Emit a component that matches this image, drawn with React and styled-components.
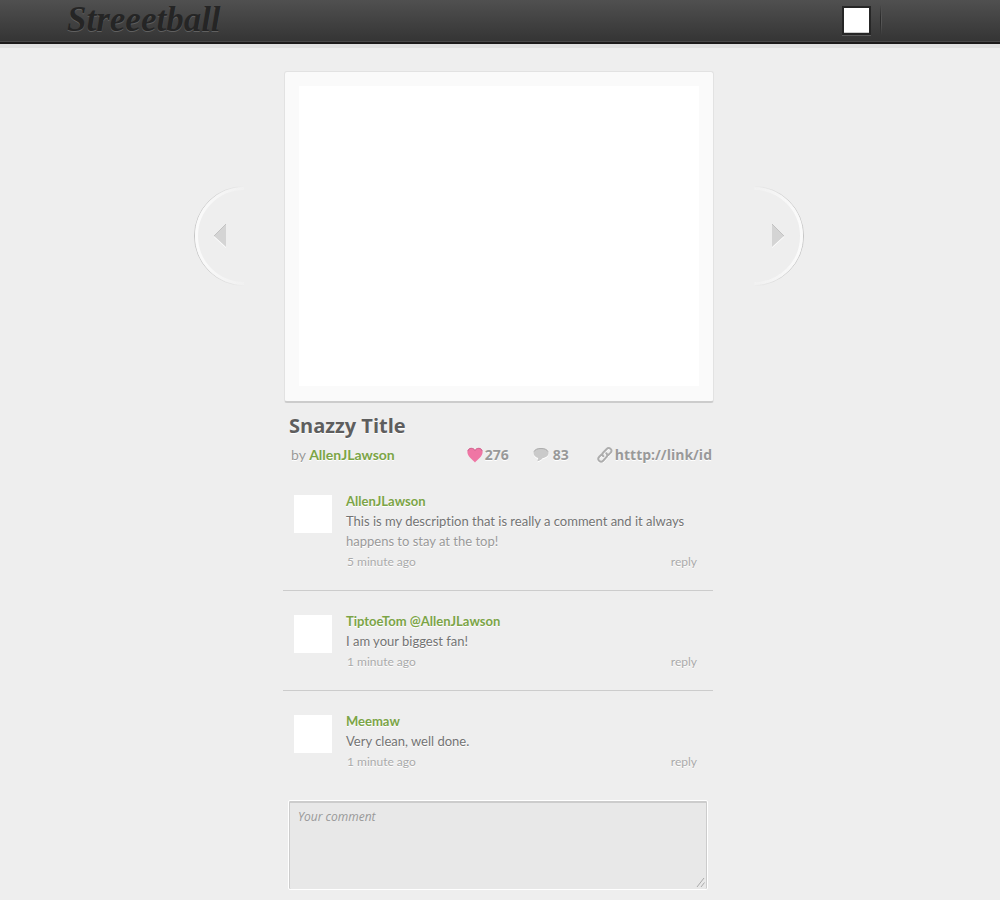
import React from "react";
import styled, { createGlobalStyle } from "styled-components";

const sans = '"Open Sans", "Noto Sans", sans-serif';
const humanist = 'Lato, "Open Sans", sans-serif';

const GlobalStyle = createGlobalStyle`
  *, *::before, *::after { box-sizing: border-box; }
  body {
    margin: 0;
    color: #777;
    background: #eee;
    font: 13px/20px ${humanist};
    font-variant-ligatures: none;
    text-shadow: 0 1px 0 #fff;
  }
  a { color: inherit; text-decoration: none; }
  button { padding: 0; border: 0; background: none; font: inherit; color: inherit; text-shadow: inherit; cursor: pointer; }
  h1, p { margin: 0; }
`;

const Header = styled.header`
  display: flex;
  align-items: center;
  justify-content: space-between;
  height: 44px;
  padding: 0 118px 2px 67px;
  background: linear-gradient(#505050, #343434);
  border-bottom: 2px solid #1c1a1a;
  box-shadow: inset 0 -1px 0 #484848, 0 4px 0 #e0e0e0;
`;

const Logo = styled.a`
  color: #252525;
  font: italic bold 35px/38px "Liberation Serif", serif;
  text-shadow: 0 1px 0 #606060;
`;

const Account = styled.div`
  display: flex;
  align-items: center;
  gap: 9px;
`;

const AccountButton = styled.button`
  width: 29px;
  height: 29px;
  border: 2px solid #262626;
  background: #fff;
  box-shadow: 0 1px 0 #5a5a5a, inset 0 -1px 0 #ccc;
`;

const Divider = styled.span`
  width: 2px;
  height: 30px;
  background: linear-gradient(90deg, #2b2b2b 50%, #555 50%);
  mask-image: linear-gradient(transparent, #000 40%, #000 60%, transparent);
`;

const Main = styled.main`
  display: flex;
  flex-direction: column;
  align-items: center;
  padding: 27px 4px 10px 0;
`;

const Viewer = styled.section`
  display: flex;
  align-items: center;
  gap: 40px;
  padding-left: 2px;
`;

const Arrow = styled.button`
  width: 50px;
  height: 100px;
  margin-bottom: 2px;
  overflow: hidden;
  transform: ${(p) => (p.$next ? "scaleX(-1)" : "none")};
  svg { display: block; }
`;

const Card = styled.div`
  width: 430px;
  padding: 14px 14px 15px;
  border: 1px solid #e2e2e2;
  border-bottom: 2px solid #ccc;
  border-radius: 3px;
  background: #fafafa;
`;

const Shot = styled.div`
  height: 300px;
  background: #fff;
`;

const Column = styled.div`
  width: 100%;
  max-width: 430px;
`;

const Title = styled.h1`
  padding: 9px 6px 0;
  color: #5e5e5e;
  font: bold 20px/28px ${sans};
`;

const Meta = styled.div`
  display: flex;
  align-items: center;
  padding: 4px 1px 0 8px;
  font-size: 14px;
  line-height: 22px;
  color: #999;
`;

const User = styled.a`
  color: #7ba446;
  font-weight: bold;
`;

const Stats = styled.div`
  display: flex;
  align-items: center;
  gap: 24px;
  margin-left: auto;
  font: bold 14px/22px ${sans};
`;

const Stat = styled.span`
  display: flex;
  align-items: center;
  gap: ${(p) => p.$gap || 2}px;
`;

const Permalink = styled.a`
  display: flex;
  align-items: center;
  gap: 2px;
  margin-left: 4px;
`;

const Comments = styled.div`
  padding-top: 5px;
`;

const Comment = styled.article`
  display: flex;
  gap: 14px;
  padding: 20px 16px 18px 11px;
  & + & { border-top: 1px solid #ccc; }
`;

const Avatar = styled.div`
  flex: none;
  width: 38px;
  height: 38px;
  margin-top: 4px;
  background: #fff;
`;

const Body = styled.div`
  flex: 1;
`;

const Line = styled.span`
  display: block;
  color: ${(p) => (p.$faded ? "#999" : "#737373")};
`;

const Foot = styled.div`
  display: flex;
  justify-content: space-between;
  padding: 1px 0 0 1px;
  font-size: 12px;
  color: #aaa;
`;

const Field = styled.div`
  position: relative;
  margin: 10px 5px 0;
`;

const TextBox = styled.textarea`
  display: block;
  width: 100%;
  height: 90px;
  padding: 6px 9px;
  resize: none;
  border: 1px solid #fff;
  border-radius: 2px;
  outline: 0;
  background: #e8e8e8;
  box-shadow: inset 0 2px 0 #ccc, inset 1px 0 0 #ccc, inset -1px 0 0 #ccc;
  color: #777;
  font: italic 12px/20px ${sans};
  &::placeholder { color: #999; opacity: 1; }
`;

const Grip = styled.svg`
  position: absolute;
  right: 3px;
  bottom: 2px;
  pointer-events: none;
`;

function ArrowButton({ next }) {
  const id = next ? "next" : "prev";
  return (
    <Arrow $next={next} aria-label={next ? "Next shot" : "Previous shot"}>
      <svg width="50" height="100" viewBox="0 0 50 100" fill="none">
        <defs>
          <linearGradient id={id}>
            <stop offset="0" stopColor="#c4c4c4" />
            <stop offset="0.5" stopColor="#c4c4c4" stopOpacity="0" />
          </linearGradient>
          <linearGradient id={id + "-light"}>
            <stop offset="0" stopColor="#fafafa" />
            <stop offset="0.5" stopColor="#fafafa" stopOpacity="0.2" />
          </linearGradient>
        </defs>
        <circle cx="50" cy="50" r="49.5" stroke={`url(#${id})`} />
        <circle cx="50" cy="50" r="47.5" stroke={`url(#${id}-light)`} strokeWidth="3" />
        <path d="M20 51 32 39V62Z" fill="#fff" />
        <path d="M20 50 32 38V61Z" fill="#d4d4d4" />
        <path d="M20 50 32 38" stroke="#c2c2c2" />
      </svg>
    </Arrow>
  );
}

const HeartIcon = () => (
  <svg width="16" height="16" viewBox="0 0 16 16" aria-hidden="true">
    <path d="M8 15.5C6 13.2.4 9.6.4 5.3.4 2.8 2 1 4.3 1 6 1 7.2 1.8 8 3 8.8 1.8 10 1 11.7 1 14 1 15.6 2.8 15.6 5.3 15.6 9.6 10 13.2 8 15.5Z" fill="#ef76a4" />
    <path d="M.8 4.2C1.2 2.3 2.6 1.3 4.3 1.3 6 1.3 7.2 2.2 8 3.5 8.8 2.2 10 1.3 11.7 1.3c1.7 0 3.1 1 3.5 2.9" fill="none" stroke="#cf658f" />
  </svg>
);

const bubble = "M8 1c4.2 0 7.500 2.100 7.500 5.100 0 2.700-2.600 4.800-6 5.200-1.300 1.600-3 2.900-5.500 3 .9-1 1.200-2.100 1.100-3.300C2.400 10.300.5 8.500.5 6.100.5 3.100 3.800 1 8 1Z";

const BubbleIcon = () => (
  <svg width="16" height="16" viewBox="0 0 16 16" aria-hidden="true">
    <path d={bubble} fill="#fff" transform="translate(0 1)" />
    <path d={bubble} fill="#cacaca" />
    <path d="M1 4.6C1.9 2.6 4.6 1.5 8 1.5s6.100 1.100 7 3.100" fill="none" stroke="#adadad" />
  </svg>
);

const chain =
  "M6.300 9.300C4.900 7.900 5.200 6.600 6.300 5.500L9.500 2.200c1.300-1.300 3-1.300 4.100-.3 1.100 1.100 1.100 2.700-.1 4L11.300 8M9.300 6.200c1.400 1.400 1.200 2.900.1 4l-3 3.300c-1.300 1.300-3.100 1.400-4.300.3-1.100-1.100-1-2.800.2-4.100L4.400 7.600";

const LinkIcon = () => (
  <svg width="16" height="16" viewBox="0 0 16 16" fill="none" strokeWidth="2" strokeLinecap="round" aria-hidden="true">
    <path d={chain} stroke="#fff" transform="translate(0 1)" />
    <path d={chain} stroke="#adadad" />
  </svg>
);

const comments = [
  {
    user: "AllenJLawson",
    lines: ["This is my description that is really a comment and it always", "happens to stay at the top!"],
    time: "5 minute ago",
  },
  { user: "TiptoeTom @AllenJLawson", lines: ["I am your biggest fan!"], time: "1 minute ago" },
  { user: "Meemaw", lines: ["Very clean, well done."], time: "1 minute ago" },
];

export default function App() {
  return (
    <>
      <GlobalStyle />
      <Header>
        <Logo href="#">Streeetball</Logo>
        <Account>
          <AccountButton aria-label="Account" />
          <Divider />
        </Account>
      </Header>
      <Main>
        <Viewer>
          <ArrowButton />
          <Card>
            <Shot />
          </Card>
          <ArrowButton next />
        </Viewer>
        <Column>
          <Title>Snazzy Title</Title>
          <Meta>
            <span>by <User href="#">AllenJLawson</User></span>
            <Stats>
              <Stat><HeartIcon />276</Stat>
              <Stat $gap={4}><BubbleIcon />83</Stat>
              <Permalink href="#"><LinkIcon />htttp://link/id</Permalink>
            </Stats>
          </Meta>
          <Comments>
            {comments.map((c) => (
              <Comment key={c.user}>
                <Avatar />
                <Body>
                  <User href="#">{c.user}</User>
                  <p>
                    {c.lines.map((text, i) => (
                      <Line key={text} $faded={i > 0}>{text}</Line>
                    ))}
                  </p>
                  <Foot>
                    <span>{c.time}</span>
                    <button>reply</button>
                  </Foot>
                </Body>
              </Comment>
            ))}
          </Comments>
          <Field>
            <TextBox aria-label="Your comment" placeholder="Your comment" />
            <Grip width="9" height="11" viewBox="0 0 9 11" stroke="#aaa" aria-hidden="true">
              <path d="M1 10 8 1M5 10 8.500 5.500" />
            </Grip>
          </Field>
        </Column>
      </Main>
    </>
  );
}
